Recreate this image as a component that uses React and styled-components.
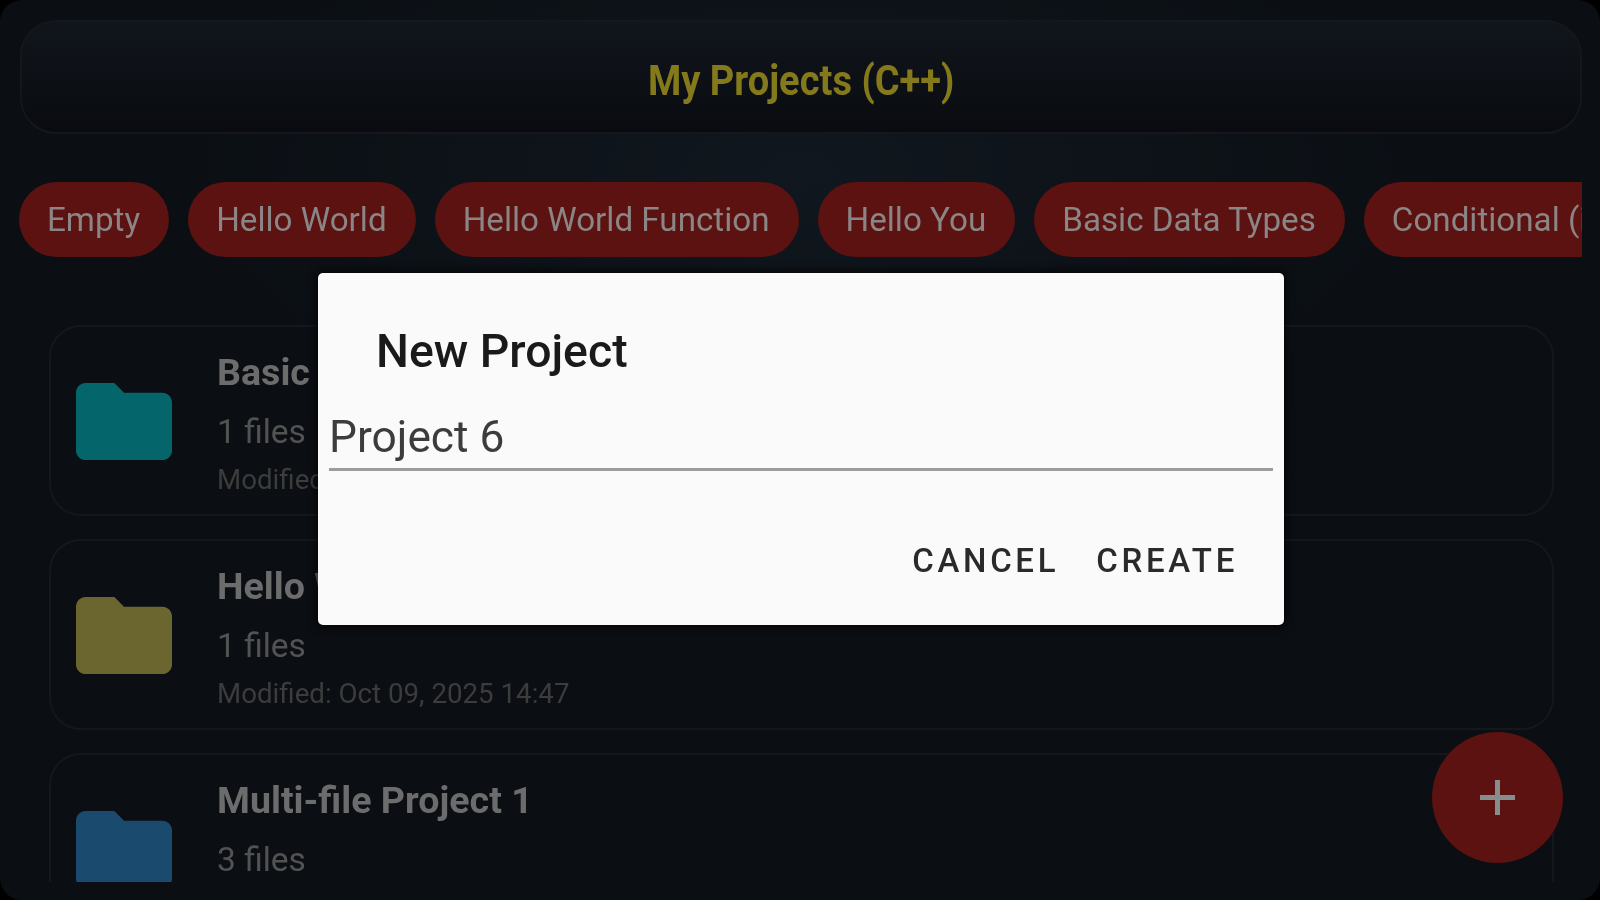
import React from 'react'
import styled, { createGlobalStyle } from 'styled-components'

const GlobalStyle = createGlobalStyle`
  html, body {
    margin: 0;
    padding: 0;
    background: #000;
    font-family: Roboto, "Noto Sans", sans-serif;
  }
  * { box-sizing: border-box; }
`

const Screen = styled.div`
  position: relative;
  width: 1600px;
  height: 900px;
  overflow: hidden;
  padding: 20px 18px 20px 19px;
  border-radius: 22px;
  background: radial-gradient(ellipse 900px 420px at 50% 170px, #10171e 0%, #0b0f14 70%, #0b0e13 100%);
  filter: blur(0.5px);
`

const Header = styled.header`
  height: 114px;
  margin: 0 0 0 1px;
  display: flex;
  align-items: center;
  justify-content: center;
  padding-top: 5px;
  border: 2px solid #14181d;
  border-radius: 36px;
  background: linear-gradient(180deg, #11161c 0%, #090b10 100%);
`

const Title = styled.h1`
  margin: 0;
  font-size: 43px;
  font-weight: 700;
  color: #847a1c;
  transform: scaleX(0.885);
`

const ChipRow = styled.div`
  display: flex;
  gap: 19px;
  margin-top: 48px;
  height: 75px;
  overflow: hidden;
`

const Chip = styled.div`
  flex: none;
  display: flex;
  align-items: center;
  height: 75px;
  padding: 0 29px 0 28px;
  border-radius: 38px;
  background: #5c1211;
  color: #8b8585;
  font-size: 33.2px;
`

const List = styled.div`
  display: flex;
  flex-direction: column;
  gap: 23px;
  height: 557px;
  margin-top: 68px;
  padding: 0 28px 0 30px;
  overflow: hidden;
`

const Card = styled.div`
  flex: none;
  display: flex;
  align-items: center;
  gap: 45px;
  height: 191px;
  padding: 0 25px;
  border: 2px solid #14181d;
  border-radius: 32px;
`

const FolderIcon = styled.svg`
  flex: none;
  width: 96px;
  height: 77px;
  margin-top: 2px;
  fill: ${(p) => p.$color};
`

const CardText = styled.div`
  display: flex;
  flex-direction: column;
  padding-top: 5px;
`

const CardTitle = styled.div`
  font-size: 37.6px;
  font-weight: 700;
  line-height: 42px;
  color: #6c6c6c;
`

const CardFiles = styled.div`
  margin-top: 19px;
  font-size: 33.5px;
  line-height: 40px;
  color: #525252;
`

const CardDate = styled.div`
  margin-top: 12px;
  font-size: 27.7px;
  line-height: 32px;
  color: #3c3c3c;
`

const Fab = styled.div`
  position: absolute;
  left: 1432px;
  top: 732px;
  width: 131px;
  height: 131px;
  display: flex;
  align-items: center;
  justify-content: center;
  border-radius: 50%;
  background: #5c1211;
`

const PlusIcon = styled.svg`
  width: 35px;
  height: 35px;
  stroke: #878c8c;
  stroke-width: 5;
`

const Overlay = styled.div`
  position: absolute;
  inset: 0;
  display: flex;
  align-items: center;
  justify-content: center;
  padding-left: 2px;
`

const Dialog = styled.div`
  width: 966px;
  height: 352px;
  margin-top: -2px;
  display: flex;
  flex-direction: column;
  padding: 0 11px;
  border-radius: 5px;
  background: #fafafa;
  box-shadow: 0 0 8px 3px rgba(0, 0, 0, 0.6);
`

const DialogTitle = styled.div`
  margin: 52px 0 0 47px;
  font-size: 46.4px;
  line-height: 52px;
  font-weight: 500;
  color: #1a1a1a;
`

const NameInput = styled.div`
  margin-top: 30px;
  height: 64px;
  border-bottom: 3px solid #9c9c9c;
  font-size: 44.3px;
  line-height: 60px;
  color: #3c3c3c;
`

const Actions = styled.div`
  display: flex;
  justify-content: flex-end;
  gap: 37px;
  margin-top: 70px;
  padding-right: 35px;
`

const ActionButton = styled.div`
  font-size: 33px;
  line-height: 40px;
  font-weight: 500;
  letter-spacing: 3.7px;
  color: #2a2a2a;
`

const chips = ['Empty', 'Hello World', 'Hello World Function', 'Hello You', 'Basic Data Types', 'Conditional (if/else)']

const projects = [
  { name: 'Basic Data Types', files: '1 files', date: 'Modified: Oct 09, 2025 14:52', color: '#04656b' },
  { name: 'Hello World', files: '1 files', date: 'Modified: Oct 09, 2025 14:47', color: '#6b6530' },
  { name: 'Multi-file Project 1', files: '3 files', date: 'Modified: Oct 09, 2025 14:40', color: '#1b4a6f' },
]

const App = () => {
  return (
    <Screen>
      <GlobalStyle />
      <Header>
        <Title>My Projects (C++)</Title>
      </Header>

      <ChipRow>
        {chips.map((c) => (
          <Chip key={c}>{c}</Chip>
        ))}
      </ChipRow>

      <List>
        {projects.map((p) => (
          <Card key={p.name}>
            <FolderIcon $color={p.color} viewBox="2 4 20 16" preserveAspectRatio="none">
              <path d="M10 4H4c-1.1 0-2 .9-2 2v12c0 1.1.9 2 2 2h16c1.1 0 2-.9 2-2V8c0-1.1-.9-2-2-2h-8l-2-2z" />
            </FolderIcon>
            <CardText>
              <CardTitle>{p.name}</CardTitle>
              <CardFiles>{p.files}</CardFiles>
              <CardDate>{p.date}</CardDate>
            </CardText>
          </Card>
        ))}
      </List>

      <Fab>
        <PlusIcon viewBox="0 0 35 35">
          <path d="M17.5 0v35M0 17.5h35" />
        </PlusIcon>
      </Fab>

      <Overlay>
        <Dialog>
          <DialogTitle>New Project</DialogTitle>
          <NameInput>Project 6</NameInput>
          <Actions>
            <ActionButton>CANCEL</ActionButton>
            <ActionButton>CREATE</ActionButton>
          </Actions>
        </Dialog>
      </Overlay>
    </Screen>
  )
}

export default App
